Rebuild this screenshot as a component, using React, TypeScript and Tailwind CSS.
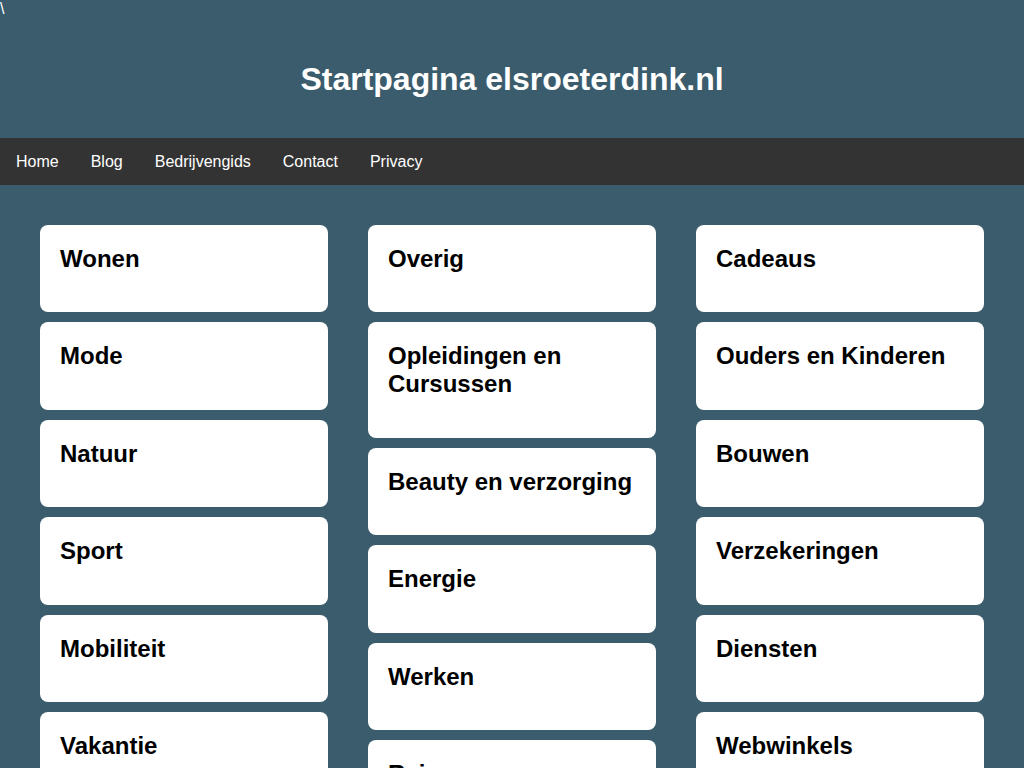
import React from "react";

const columns: string[][] = [
  ["Wonen", "Mode", "Natuur", "Sport", "Mobiliteit", "Vakantie", "Gezondheid"],
  ["Overig", "Opleidingen en Cursussen", "Beauty en verzorging", "Energie", "Werken", "Reizen", "Financiën"],
  ["Cadeaus", "Ouders en Kinderen", "Bouwen", "Verzekeringen", "Diensten", "Webwinkels", "Vrije tijd"],
];

const navItems = ["Home", "Blog", "Bedrijvengids", "Contact", "Privacy"];

export default function App() {
  return (
    <div className="min-h-screen bg-[#3a5c6c] text-white font-['Liberation_Sans',Arial,sans-serif]">
      {/* stray character left at the top of the page */}
      <div className="text-base leading-[normal]">\</div>

      {/* Header */}
      <header className="pt-[43px] pb-[40px] text-center">
        <h1 className="text-[32px] font-bold leading-[normal]">Startpagina elsroeterdink.nl</h1>
      </header>

      {/* Navigation */}
      <nav className="bg-[#333333] flex">
        {navItems.map((item) => (
          <a key={item} href="#" className="px-4 pt-[15px] pb-[14px] text-base leading-[normal] text-white">
            {item}
          </a>
        ))}
      </nav>

      {/* Category blocks */}
      <main className="px-10 pt-10 pb-10 grid grid-cols-3 gap-x-10 items-start">
        {columns.map((col, i) => (
          <div key={i} className="flex flex-col gap-[10px]">
            {col.map((title) => (
              <div key={title} className="bg-white rounded-lg p-5">
                <h2 className="text-black text-2xl font-bold leading-[normal] mb-[19.4px]">{title}</h2>
              </div>
            ))}
          </div>
        ))}
      </main>
    </div>
  );
}
